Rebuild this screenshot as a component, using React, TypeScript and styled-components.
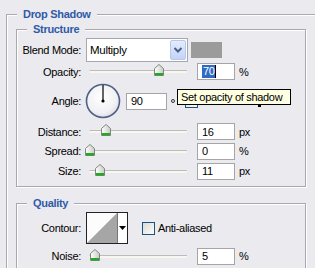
import styled, { createGlobalStyle } from 'styled-components';

const BG = '#ebeaee';

const GlobalStyle = createGlobalStyle`
  html, body { margin: 0; padding: 0; background: ${BG}; overflow: hidden; }
  body {
    font-family: "Liberation Sans", Arial, sans-serif;
    font-size: 11px;
    letter-spacing: -0.3px;
    color: #000;
  }
`;

type SliderRow = { label: string; value: string; unit: string; thumb: number };

const STRUCTURE_SLIDERS: SliderRow[] = [
  { label: 'Distance:', value: '16', unit: 'px', thumb: 106 },
  { label: 'Spread:', value: '0', unit: '%', thumb: 90 },
  { label: 'Size:', value: '11', unit: 'px', thumb: 100 },
];

const TRACK_START = 89;

function Thumb({ center }: { center: number }) {
  return (
    <ThumbIcon width="10" height="12" viewBox="0 0 10 12" style={{ left: center - TRACK_START - 5 }}>
      <defs>
        <linearGradient id="thumbFill" x1="0" y1="0" x2="1" y2="0">
          <stop offset="0" stopColor="#ffffff" />
          <stop offset="1" stopColor="#c9cbc6" />
        </linearGradient>
      </defs>
      <polygon points="0.5,4.5 5,0.5 9.5,4.5 9.5,11.5 0.5,11.5" fill="url(#thumbFill)" stroke="#7f877f" />
      <rect x="1" y="9" width="8" height="2.5" fill="#25a825" />
    </ThumbIcon>
  );
}

function Slider({ center }: { center: number }) {
  return (
    <Track>
      <Thumb center={center} />
    </Track>
  );
}

function Field({ children, width }: { children: React.ReactNode; width?: number }) {
  return <NumField $w={width}>{children}</NumField>;
}

export default function App() {
  return (
    <>
      <GlobalStyle />
      <Page>
        <OuterGroup>
          <Legend>Drop Shadow</Legend>

          <Group>
            <Legend>Structure</Legend>
            <Body $top={6} $bottom={5}>
              <Row $h={27}>
                <Label>Blend Mode:</Label>
                <Select>
                  <SelectText>Multiply</SelectText>
                  <DropButton>
                    <svg width="12" height="10" viewBox="0 0 12 10">
                      <polyline points="2.5,3 6,6.5 9.5,3" fill="none" stroke="#4a5f86" strokeWidth="2" />
                    </svg>
                  </DropButton>
                </Select>
                <Swatch />
              </Row>

              <Row $h={17}>
                <Label>Opacity:</Label>
                <Slider center={159} />
                <Field>
                  <Selected>70</Selected>
                  <Caret />
                </Field>
                <Unit>%</Unit>
              </Row>

              <AngleRow $h={42}>
                <Label>Angle:</Label>
                <Dial width="36" height="36" viewBox="0 0 36 36">
                  <defs>
                    <radialGradient id="dialFill" cx="0.45" cy="0.4" r="0.65">
                      <stop offset="0" stopColor="#ffffff" />
                      <stop offset="0.7" stopColor="#f1f1f4" />
                      <stop offset="1" stopColor="#d6d7df" />
                    </radialGradient>
                  </defs>
                  <circle cx="18" cy="18" r="16.5" fill="url(#dialFill)" stroke="#4f6088" strokeWidth="1.6" />
                  <line x1="18" y1="18" x2="18" y2="2" stroke="#000" strokeWidth="1.2" />
                  <circle cx="18" cy="18" r="1.6" fill="#000" />
                </Dial>
                <AngleField>
                  <Field width={41}>90</Field>
                </AngleField>
                <Degree />
                <CheckBox />
                <HiddenMark />
                <Tooltip>Set opacity of shadow</Tooltip>
              </AngleRow>

              {STRUCTURE_SLIDERS.map((s, i) => (
                <Row key={s.label} $h={i === 0 ? 19 : 20}>
                  <Label>{s.label}</Label>
                  <Slider center={s.thumb} />
                  <Field>{s.value}</Field>
                  <Unit>{s.unit}</Unit>
                </Row>
              ))}
            </Body>
          </Group>

          <QualityGroup>
            <Legend>Quality</Legend>
            <Body $top={8} $bottom={20}>
              <Row $h={32}>
                <Label>Contour:</Label>
                <ContourBox>
                  <svg width="30" height="30" viewBox="0 0 30 30">
                    <rect width="30" height="30" fill="#fcfcfc" />
                    <polygon points="0,30 30,0 30,30" fill="#a6a6a6" />
                  </svg>
                  <ContourArrow>
                    <svg width="7" height="4" viewBox="0 0 7 4">
                      <polygon points="0,0 7,0 3.5,4" fill="#000" />
                    </svg>
                  </ContourArrow>
                </ContourBox>
                <AntiBox />
                <CheckLabel>Anti-aliased</CheckLabel>
              </Row>
              <Row $h={18} $top={3}>
                <Label>Noise:</Label>
                <Slider center={95} />
                <Field>5</Field>
                <Unit>%</Unit>
              </Row>
            </Body>
          </QualityGroup>
        </OuterGroup>
      </Page>
    </>
  );
}

// ─── Styles ──────────────────────────────────────────────────────────────

const Page = styled.div`
  width: 315px;
  height: 268px;
  overflow: hidden;
  box-sizing: border-box;
  padding: 14px 0 0 6px;
`;

const Etched = styled.div`
  position: relative;
  box-sizing: border-box;
  border: 1px solid #a9a8ad;
  box-shadow: inset 1px 1px 0 #fff, 1px 1px 0 #fff;
`;

const OuterGroup = styled(Etched)`
  width: 340px;
  height: 320px;
  padding: 14px 0 0 9px;
`;

const Group = styled(Etched)`
  width: 290px;
`;

const QualityGroup = styled(Group)`
  margin-top: 16px;
`;

const Legend = styled.span`
  position: absolute;
  top: -7px;
  left: 10px;
  padding: 0 6px;
  background: ${BG};
  color: #2f5aa8;
  font-weight: bold;
  font-size: 11px;
  line-height: 13px;
`;

const Body = styled.div<{ $top: number; $bottom: number }>`
  display: flex;
  flex-direction: column;
  padding: ${p => p.$top}px 0 ${p => p.$bottom}px 0;
`;

const Row = styled.div<{ $h: number; $top?: number }>`
  display: flex;
  align-items: center;
  height: ${p => p.$h}px;
  margin-top: ${p => p.$top ?? 0}px;
`;

const AngleRow = styled(Row)`
  position: relative;
`;

const Label = styled.span`
  flex: none;
  width: 64px;
  margin-right: 5px;
  text-align: right;
  white-space: nowrap;
`;

const Select = styled.div`
  flex: none;
  display: flex;
  align-items: center;
  justify-content: space-between;
  box-sizing: border-box;
  width: 102px;
  height: 24px;
  padding: 1px;
  border: 1px solid #a5a8b0;
  background: #fff;
`;

const SelectText = styled.span`
  padding-left: 2px;
  font-size: 11.5px;
`;

const DropButton = styled.div`
  display: flex;
  align-items: center;
  justify-content: center;
  box-sizing: border-box;
  width: 16px;
  height: 100%;
  border: 1px solid #b7c8ee;
  border-radius: 2px;
  background: linear-gradient(#e4ecfd, #c3d3f7);
`;

const Swatch = styled.div`
  flex: none;
  width: 31px;
  height: 16px;
  margin-left: 3px;
  background: #9b9b9b;
`;

const Track = styled.div`
  position: relative;
  flex: none;
  width: 98px;
  height: 2px;
  margin: 0 10px 0 3px;
  border-top: 1px solid #bdbdb8;
  border-radius: 2px 0 0 2px;
  background: #f7f7ef;
`;

const ThumbIcon = styled.svg`
  position: absolute;
  top: -7px;
`;

const NumField = styled.div<{ $w?: number }>`
  flex: none;
  display: flex;
  align-items: center;
  box-sizing: border-box;
  width: ${p => p.$w ?? 38}px;
  height: 17px;
  padding-left: 4px;
  border: 1px solid #a5a5a8;
  background: #fff;
`;

const Selected = styled.span`
  background: #316ac5;
  color: #fff;
  line-height: 13px;
  padding: 0 0 0 1px;
`;

const Caret = styled.span`
  width: 1px;
  height: 13px;
  background: #000;
`;

const Unit = styled.span`
  margin-left: 4px;
`;

const Dial = styled.svg`
  flex: none;
  margin-left: -1px;
`;

const AngleField = styled.div`
  margin-left: 5px;
`;

const Degree = styled.span`
  flex: none;
  box-sizing: border-box;
  width: 4px;
  height: 4px;
  margin: -1px 0 0 4px;
  border: 1px solid #333;
  border-radius: 50%;
`;

const CheckBox = styled.span`
  flex: none;
  box-sizing: border-box;
  width: 13px;
  height: 13px;
  margin-left: 10px;
  border: 1px solid #1c5180;
  background: linear-gradient(135deg, #dcdcd7, #fbfbf9);
`;

const AntiBox = styled(CheckBox)`
  margin-left: 14px;
`;

/* the descender of the label hidden under the tooltip */
const HiddenMark = styled.span`
  flex: none;
  width: 3px;
  height: 2px;
  margin: 10px 0 0 60px;
  background: #000;
`;

const CheckLabel = styled.span`
  margin-left: 3px;
  white-space: nowrap;
`;

const Tooltip = styled.div`
  position: absolute;
  left: 160px;
  top: 9px;
  box-sizing: border-box;
  width: 114px;
  height: 16px;
  padding-left: 3px;
  border: 1px solid #000;
  background: #ffffe1;
  line-height: 14px;
  white-space: nowrap;
  z-index: 1;
`;

const ContourBox = styled.div`
  flex: none;
  display: flex;
  box-sizing: border-box;
  width: 42px;
  height: 32px;
  border: 1px solid #222;
  background: #fff;
`;

const ContourArrow = styled.div`
  flex: 1;
  display: flex;
  align-items: center;
  justify-content: center;
  border-left: 1px solid #777;
`;
